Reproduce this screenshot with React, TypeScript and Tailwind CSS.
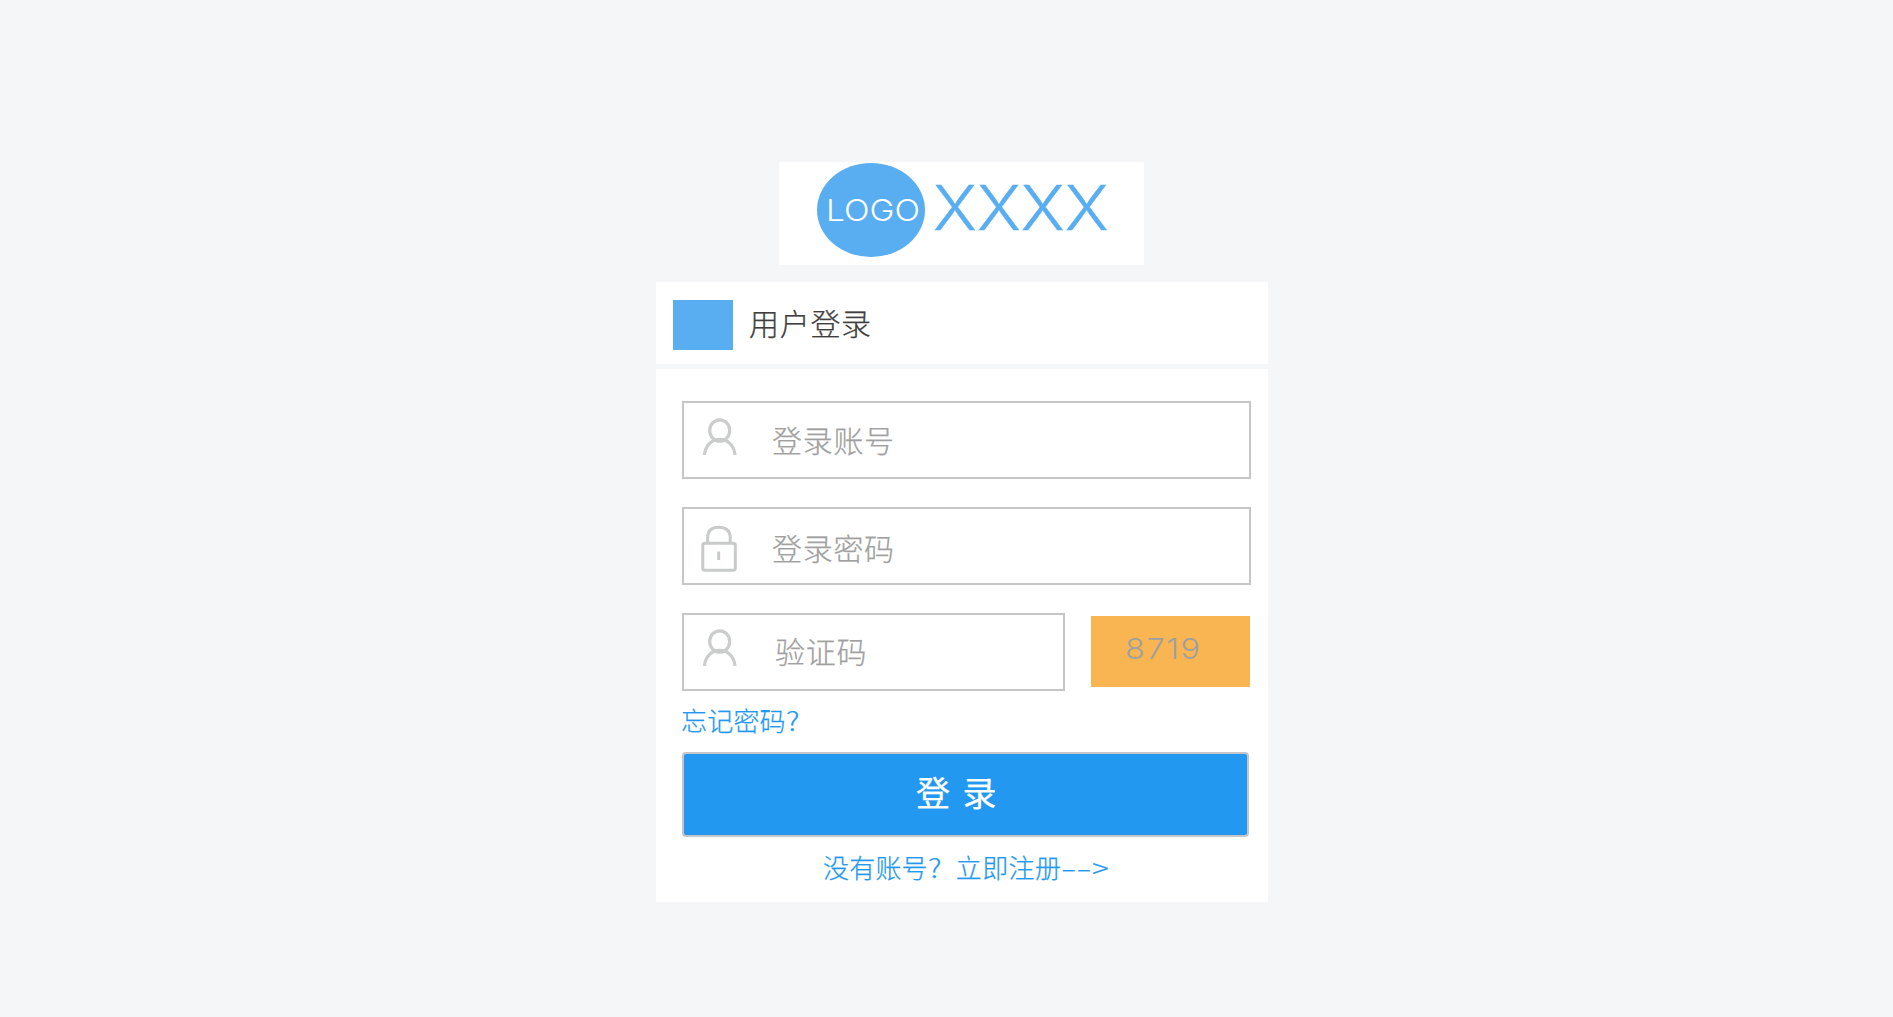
import type { ReactNode } from "react";

function UserIcon() {
  return (
    <svg className="mt-px" width="36" height="38" viewBox="0 0 36 38" fill="none" stroke="#cbcdcd" strokeWidth="3.2">
      <ellipse cx="17.700" cy="12.500" rx="10" ry="10.700" />
      <path d="M2.500 37C3 28 9.300 21.300 17.700 21.300S32.500 28 33 37" />
    </svg>
  );
}

function LockIcon() {
  return (
    <svg width="36" height="48" viewBox="0 0 36 48" fill="none" stroke="#c9cbcb" strokeWidth="3">
      <path d="M6.700 19V13.500C6.700 6.500 11 3.200 17.800 3.200S29.200 6.500 29.200 13.500V19" />
      <rect x="1.800" y="19.300" width="32.500" height="27" rx="2" />
      <path d="M17.700 27.500V36" />
    </svg>
  );
}

type FieldProps = { icon: ReactNode; className: string; label: string; textClass: string };

function Field({ icon, className, label, textClass }: FieldProps) {
  return (
    <div className={`flex h-[78px] items-start border-2 border-[#c6c6c6] ${className}`}>
      {icon}
      <span className={`text-[30px] leading-[44px] tracking-[0.7px] whitespace-nowrap text-[#a0a0a0] ${textClass}`}>{label}</span>
    </div>
  );
}

export default function App() {
  return (
    <main className="h-[1017px] overflow-hidden bg-[#f4f6f8] pt-[162px] pl-[656px] font-['Noto_Sans_CJK_SC',sans-serif] font-light [-webkit-text-stroke:0.25px_currentColor]">
      <div className="flex w-[612px] flex-col">
        <header className="ml-[123px] flex h-[103px] w-[365px] items-start bg-white pt-px pl-[38px] font-['Inter','Noto_Sans_CJK_SC',sans-serif] [-webkit-text-stroke:0]">
          <div className="flex h-[94px] w-[108px] items-center justify-center rounded-[50%] bg-[#58aef1]">
            <span className="ml-[3px] scale-x-[1.12] text-[30px] leading-[36px] text-white">LOGO</span>
          </div>
          <span className="ml-[8px] origin-left scale-x-[1.07] pt-[8px] text-[62px] leading-[74px] whitespace-nowrap text-[#58aef1] [-webkit-text-stroke:0.4px_currentColor]">XXXX</span>
        </header>

        <section className="mt-[17px] flex h-[82px] items-start bg-white pt-[18px] pl-[17px]">
          <div className="h-[50px] w-[60px] bg-[#58aef1]" />
          <h1 className="ml-4 text-[30px] leading-[45px] tracking-[0.7px] text-[#3f3f3f]">用户登录</h1>
        </section>

        <form className="mt-[5px] flex h-[533px] flex-col bg-white px-[26px] pt-[32px]">
          <div className="flex w-[569px] flex-col gap-7">
            <Field className="pt-[14px] pl-[18px]" icon={<UserIcon />} label="登录账号" textClass="ml-[34px]" />
            <Field className="pt-[15px] pl-[17px]" icon={<LockIcon />} label="登录密码" textClass="ml-[35px] pt-px" />
            <div className="flex items-start">
              <Field className="w-[383px] pt-[13px] pl-[18px]" icon={<UserIcon />} label="验证码" textClass="ml-[37px]" />
              <div className="mt-[3px] ml-[26px] h-[71px] w-[159px] bg-[#f9b552] pt-[15px] pl-[34px] font-['Inter','Noto_Sans_CJK_SC',sans-serif] text-[29px] leading-[36px] text-[#a0a0a0] [-webkit-text-stroke:0]">
                <span className="inline-block origin-left scale-x-[1.12] tracking-[1.4px]">8719</span>
              </div>
            </div>
          </div>
          <a className="mt-[10px] -ml-px self-start text-[26px] leading-[38px] tracking-[0.2px] whitespace-nowrap text-[#2398f0]">
            忘记密码<span className="inline-block origin-left scale-x-[1.15]">?</span>
          </a>
          <button type="button" className="mt-[13px] flex h-[85px] w-[567px] items-start justify-start rounded-[4px] border-2 border-[#c6c6c6] bg-[#2398f0] pt-[13px] pl-[232px] text-[34px] leading-[50px] font-normal [word-spacing:5px] whitespace-pre text-white">
            登 录
          </button>
          <a className="mt-[11px] ml-[141px] flex self-start text-[26px] leading-[38px] whitespace-pre text-[#2398f0]">
            <span className="tracking-[0.2px]">没有账号</span>
            <span className="w-[28px] origin-left scale-x-[1.15]">? </span>
            <span className="tracking-[0.4px]">立即注册</span>
            <span className="w-[31px] origin-left scale-x-[1.75]">--</span>
            <span className="origin-left scale-x-[1.2]">&gt;</span>
          </a>
        </form>
      </div>
    </main>
  );
}
